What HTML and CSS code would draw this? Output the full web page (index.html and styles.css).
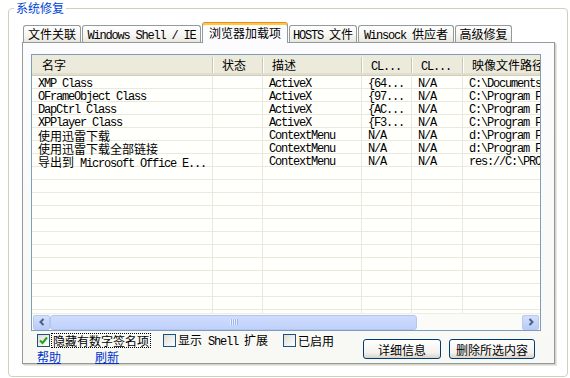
FILE: index.html
```html
<!DOCTYPE html>
<html lang="zh-CN">
<head>
  <meta charset="UTF-8" />
  <title>系统修复</title>
  <link rel="stylesheet" href="styles.css">
</head>
<body>

  <fieldset class="group">
    <legend>系统修复</legend>
    <div class="group-body">

      <div class="tabs">
        <div class="tab t1">文件关联</div>
        <div class="tab t2"><span class="en">Windows Shell / IE</span></div>
        <div class="tab t3 active">浏览器加载项</div>
        <div class="tab t4"><span class="en">HOSTS </span>文件</div>
        <div class="tab t5"><span class="en">Winsock </span>供应者</div>
        <div class="tab t6">高级修复</div>
      </div>

      <div class="panel">
        <div class="list">
          <div class="grid">
            <div class="row head">
              <div class="cell first">名字</div>
              <div class="cell">状态</div>
              <div class="cell">描述</div>
              <div class="cell"><span class="en">CL...</span></div>
              <div class="cell"><span class="en">CL...</span></div>
              <div class="cell">映像文件路径</div>
            </div>
            <div class="row">
              <div class="cell">XMP Class</div><div class="cell"></div><div class="cell">ActiveX</div>
              <div class="cell">{64...</div><div class="cell">N/A</div><div class="cell">C:\Documents and Settings\</div>
            </div>
            <div class="row">
              <div class="cell">OFrameObject Class</div><div class="cell"></div><div class="cell">ActiveX</div>
              <div class="cell">{97...</div><div class="cell">N/A</div><div class="cell">C:\Program Files\Common</div>
            </div>
            <div class="row">
              <div class="cell">DapCtrl Class</div><div class="cell"></div><div class="cell">ActiveX</div>
              <div class="cell">{AC...</div><div class="cell">N/A</div><div class="cell">C:\Program Files\Thunder</div>
            </div>
            <div class="row">
              <div class="cell">XPPlayer Class</div><div class="cell"></div><div class="cell">ActiveX</div>
              <div class="cell">{F3...</div><div class="cell">N/A</div><div class="cell">C:\Program Files\Thunder</div>
            </div>
            <div class="row">
              <div class="cell"><span class="zh">使用迅雷下载</span></div><div class="cell"></div><div class="cell">ContextMenu</div>
              <div class="cell">N/A</div><div class="cell">N/A</div><div class="cell">d:\Program Files\Thunder</div>
            </div>
            <div class="row">
              <div class="cell"><span class="zh">使用迅雷下载全部链接</span></div><div class="cell"></div><div class="cell">ContextMenu</div>
              <div class="cell">N/A</div><div class="cell">N/A</div><div class="cell">d:\Program Files\Thunder</div>
            </div>
            <div class="row">
              <div class="cell"><span class="zh">导出到</span> Microsoft Office E...</div><div class="cell"></div><div class="cell">ContextMenu</div>
              <div class="cell">N/A</div><div class="cell">N/A</div><div class="cell">res://C:\PROGRA~1\</div>
            </div>
            <div class="row"><div class="cell"></div><div class="cell"></div><div class="cell"></div><div class="cell"></div><div class="cell"></div><div class="cell"></div></div>
            <div class="row"><div class="cell"></div><div class="cell"></div><div class="cell"></div><div class="cell"></div><div class="cell"></div><div class="cell"></div></div>
            <div class="row"><div class="cell"></div><div class="cell"></div><div class="cell"></div><div class="cell"></div><div class="cell"></div><div class="cell"></div></div>
            <div class="row"><div class="cell"></div><div class="cell"></div><div class="cell"></div><div class="cell"></div><div class="cell"></div><div class="cell"></div></div>
            <div class="row"><div class="cell"></div><div class="cell"></div><div class="cell"></div><div class="cell"></div><div class="cell"></div><div class="cell"></div></div>
            <div class="row"><div class="cell"></div><div class="cell"></div><div class="cell"></div><div class="cell"></div><div class="cell"></div><div class="cell"></div></div>
            <div class="row"><div class="cell"></div><div class="cell"></div><div class="cell"></div><div class="cell"></div><div class="cell"></div><div class="cell"></div></div>
            <div class="row"><div class="cell"></div><div class="cell"></div><div class="cell"></div><div class="cell"></div><div class="cell"></div><div class="cell"></div></div>
            <div class="row"><div class="cell"></div><div class="cell"></div><div class="cell"></div><div class="cell"></div><div class="cell"></div><div class="cell"></div></div>
            <div class="row"><div class="cell"></div><div class="cell"></div><div class="cell"></div><div class="cell"></div><div class="cell"></div><div class="cell"></div></div>
            <div class="row"><div class="cell"></div><div class="cell"></div><div class="cell"></div><div class="cell"></div><div class="cell"></div><div class="cell"></div></div>
            <div class="row"><div class="cell"></div><div class="cell"></div><div class="cell"></div><div class="cell"></div><div class="cell"></div><div class="cell"></div></div>
          </div>

          <div class="hscroll">
            <div class="sbtn">
              <svg width="8" height="8" viewBox="0 0 8 8"><path d="M5.5 1 L2.5 4 L5.5 7" fill="none" stroke="#4d6185" stroke-width="2"/></svg>
            </div>
            <div class="thumb">
              <svg width="8" height="6" viewBox="0 0 8 6"><path d="M0.5 0v6M2.5 0v6M4.5 0v6M6.5 0v6" stroke="#e9efff" stroke-width="1"/><path d="M1.5 0v6M3.5 0v6M5.5 0v6M7.5 0v6" stroke="#9fb5ee" stroke-width="1"/></svg>
            </div>
            <div class="track"></div>
            <div class="sbtn">
              <svg width="8" height="8" viewBox="0 0 8 8"><path d="M2.5 1 L5.5 4 L2.5 7" fill="none" stroke="#4d6185" stroke-width="2"/></svg>
            </div>
          </div>
        </div>

        <div class="footer">
          <div class="footer-left">
            <div class="opts">
              <label class="opt">
                <span class="box checked">
                  <svg width="9" height="9" viewBox="0 0 9 9"><path d="M1 4.5 L3.5 7 L8 1.5" fill="none" stroke="#21a121" stroke-width="2"/></svg>
                </span>
                <span class="focus">隐藏有数字签名项</span>
              </label>
              <label class="opt">
                <span class="box"></span>
                <span class="txt">显示<span class="en"> Shell </span>扩展</span>
              </label>
              <label class="opt">
                <span class="box"></span>
                <span class="txt">已启用</span>
              </label>
            </div>
            <div class="links">
              <a href="#">帮助</a>
              <a href="#">刷新</a>
            </div>
          </div>
          <div class="buttons">
            <button class="btn b1">详细信息</button>
            <button class="btn b2">删除所选内容</button>
          </div>
        </div>
      </div>

    </div>
  </fieldset>

</body>
</html>
```

FILE: styles.css
```css
* {
  box-sizing: border-box;
}

html, body {
  margin: 0;
  padding: 0;
  background: #fff;
  color: #000;
  font-family: "Noto Sans CJK SC", "Liberation Sans", sans-serif;
  font-size: 12px;
  line-height: 14px;
}

.en {
  font-family: "Liberation Mono", "Noto Sans CJK SC", monospace;
  letter-spacing: -1.2px;
}

.zh {
  font-family: "Noto Sans CJK SC", sans-serif;
  letter-spacing: 0;
}

/* group box */
.group {
  margin: 1px 0 0 8px;
  padding: 0;
  width: 560px;
  height: 376px;
  border: 1px solid #d0d0bf;
  border-radius: 4px;
}

.group legend {
  margin-left: 5px;
  padding: 0 2px;
  color: #0046d5;
  line-height: 14px;
}

.group-body {
  padding: 7px 0 0 13px;
}

/* tabs */
.tabs {
  display: flex;
  align-items: flex-end;
  gap: 1px;
  height: 20px;
  padding-left: 1px;
}

.tab {
  height: 17px;
  border: 1px solid #919b9c;
  border-bottom: none;
  border-radius: 3px 3px 0 0;
  background: linear-gradient(#ffffff, #f7f6f2 55%, #e9e7dd);
  text-align: center;
  line-height: 15px;
  white-space: nowrap;
}

.t1 { width: 58px; }
.t2 { width: 119px; }
.t3 { width: 86px; }
.t4 { width: 68px; }
.t5 { width: 96px; }
.t6 { width: 57px; }

.tab.active {
  position: relative;
  z-index: 2;
  height: 21px;
  margin-bottom: -1px;
  border-top: 1px solid #e68b2c;
  box-shadow: inset 0 2px 0 #ffc73c;
  background: #fcfcfe;
  line-height: 19px;
}

/* panel */
.panel {
  width: 533px;
  height: 322px;
  padding: 11px 0 0 8px;
  border: 1px solid #919b9c;
  background: linear-gradient(#fcfcfe, #f8f8f5);
  box-shadow: 1px 1px 0 #d6d3c8, 2px 2px 0 #e9e7df;
}

/* list view */
.list {
  width: 510px;
  height: 277px;
  border: 1px solid #7f9db9;
  background: #fffffb;
}

.grid {
  height: 258px;
  overflow: hidden;
}

.row {
  display: grid;
  grid-template-columns: 181px 50px 99px 50px 51px 160px;
  height: 13px;
  border-bottom: 1px solid #ebe9de;
  font-family: "Liberation Mono", "Noto Sans CJK SC", monospace;
  letter-spacing: -1.2px;
  line-height: 12px;
  white-space: nowrap;
}

.cell {
  padding: 2px 0 0 6px;
  overflow-x: clip;
  overflow-y: visible;
  border-right: 1px solid #ebe9de;
}

.row.head {
  height: 21px;
  align-items: center;
  background: #ebeadb;
  border-bottom: 1px solid #d2cebd;
  box-shadow: inset 0 -2px 0 #e2decd;
  font-family: "Noto Sans CJK SC", sans-serif;
  letter-spacing: 0;
  line-height: 16px;
}

.head .cell {
  height: 16px;
  padding: 0 0 0 9px;
  border-right: 1px solid #c9c6b4;
  box-shadow: 1px 0 0 #fff;
}

.head .cell.first {
  padding-left: 10px;
}

/* horizontal scroll bar */
.hscroll {
  display: flex;
  align-items: center;
  height: 17px;
  padding: 0 1px;
  background: #fbfbf8;
  border-top: 1px solid #eeede6;
}

.sbtn {
  display: flex;
  align-items: center;
  justify-content: center;
  width: 17px;
  height: 15px;
  border: 1px solid #b7c8f3;
  border-radius: 2px;
  background: linear-gradient(#d4e0fd, #b9cbf7);
}

.thumb {
  display: flex;
  align-items: center;
  justify-content: center;
  width: 367px;
  height: 15px;
  border: 1px solid #b3c5f3;
  border-radius: 3px;
  background: linear-gradient(#cfdcfd, #c0d1fa);
}

.track {
  flex: 1;
}

/* footer */
.footer {
  display: flex;
  justify-content: space-between;
  width: 510px;
  padding: 2px 6px 0 6px;
}

.footer-left {
  display: flex;
  flex-direction: column;
}

.opts {
  display: flex;
  align-items: center;
  height: 15px;
}

.opt {
  display: flex;
  align-items: center;
  margin-right: 12px;
}

.opt:nth-child(2) {
  margin-right: 15px;
}

.box {
  display: flex;
  align-items: center;
  justify-content: center;
  width: 13px;
  height: 13px;
  border: 1px solid #1c5180;
  background: linear-gradient(135deg, #dcdcd7, #ffffff);
}

.focus {
  margin-left: 1px;
  padding: 0 1px;
  border: 1px dotted #000;
  line-height: 13px;
}

.txt {
  margin-left: 2px;
}

.links {
  display: flex;
  gap: 34px;
  margin-top: 1px;
  line-height: 15px;
}

.links a {
  color: #0033cc;
  text-decoration: underline;
}

.buttons {
  display: flex;
  gap: 8px;
  margin-top: 6px;
}

.btn {
  height: 20px;
  padding: 0;
  border: 1px solid #003c74;
  border-radius: 3px;
  background: linear-gradient(#ffffff, #f3f2ee 70%, #d8d4ca);
  font-family: "Noto Sans CJK SC", sans-serif;
  font-size: 12px;
  color: #000;
}

.b1 { width: 78px; }
.b2 { width: 86px; }
```
